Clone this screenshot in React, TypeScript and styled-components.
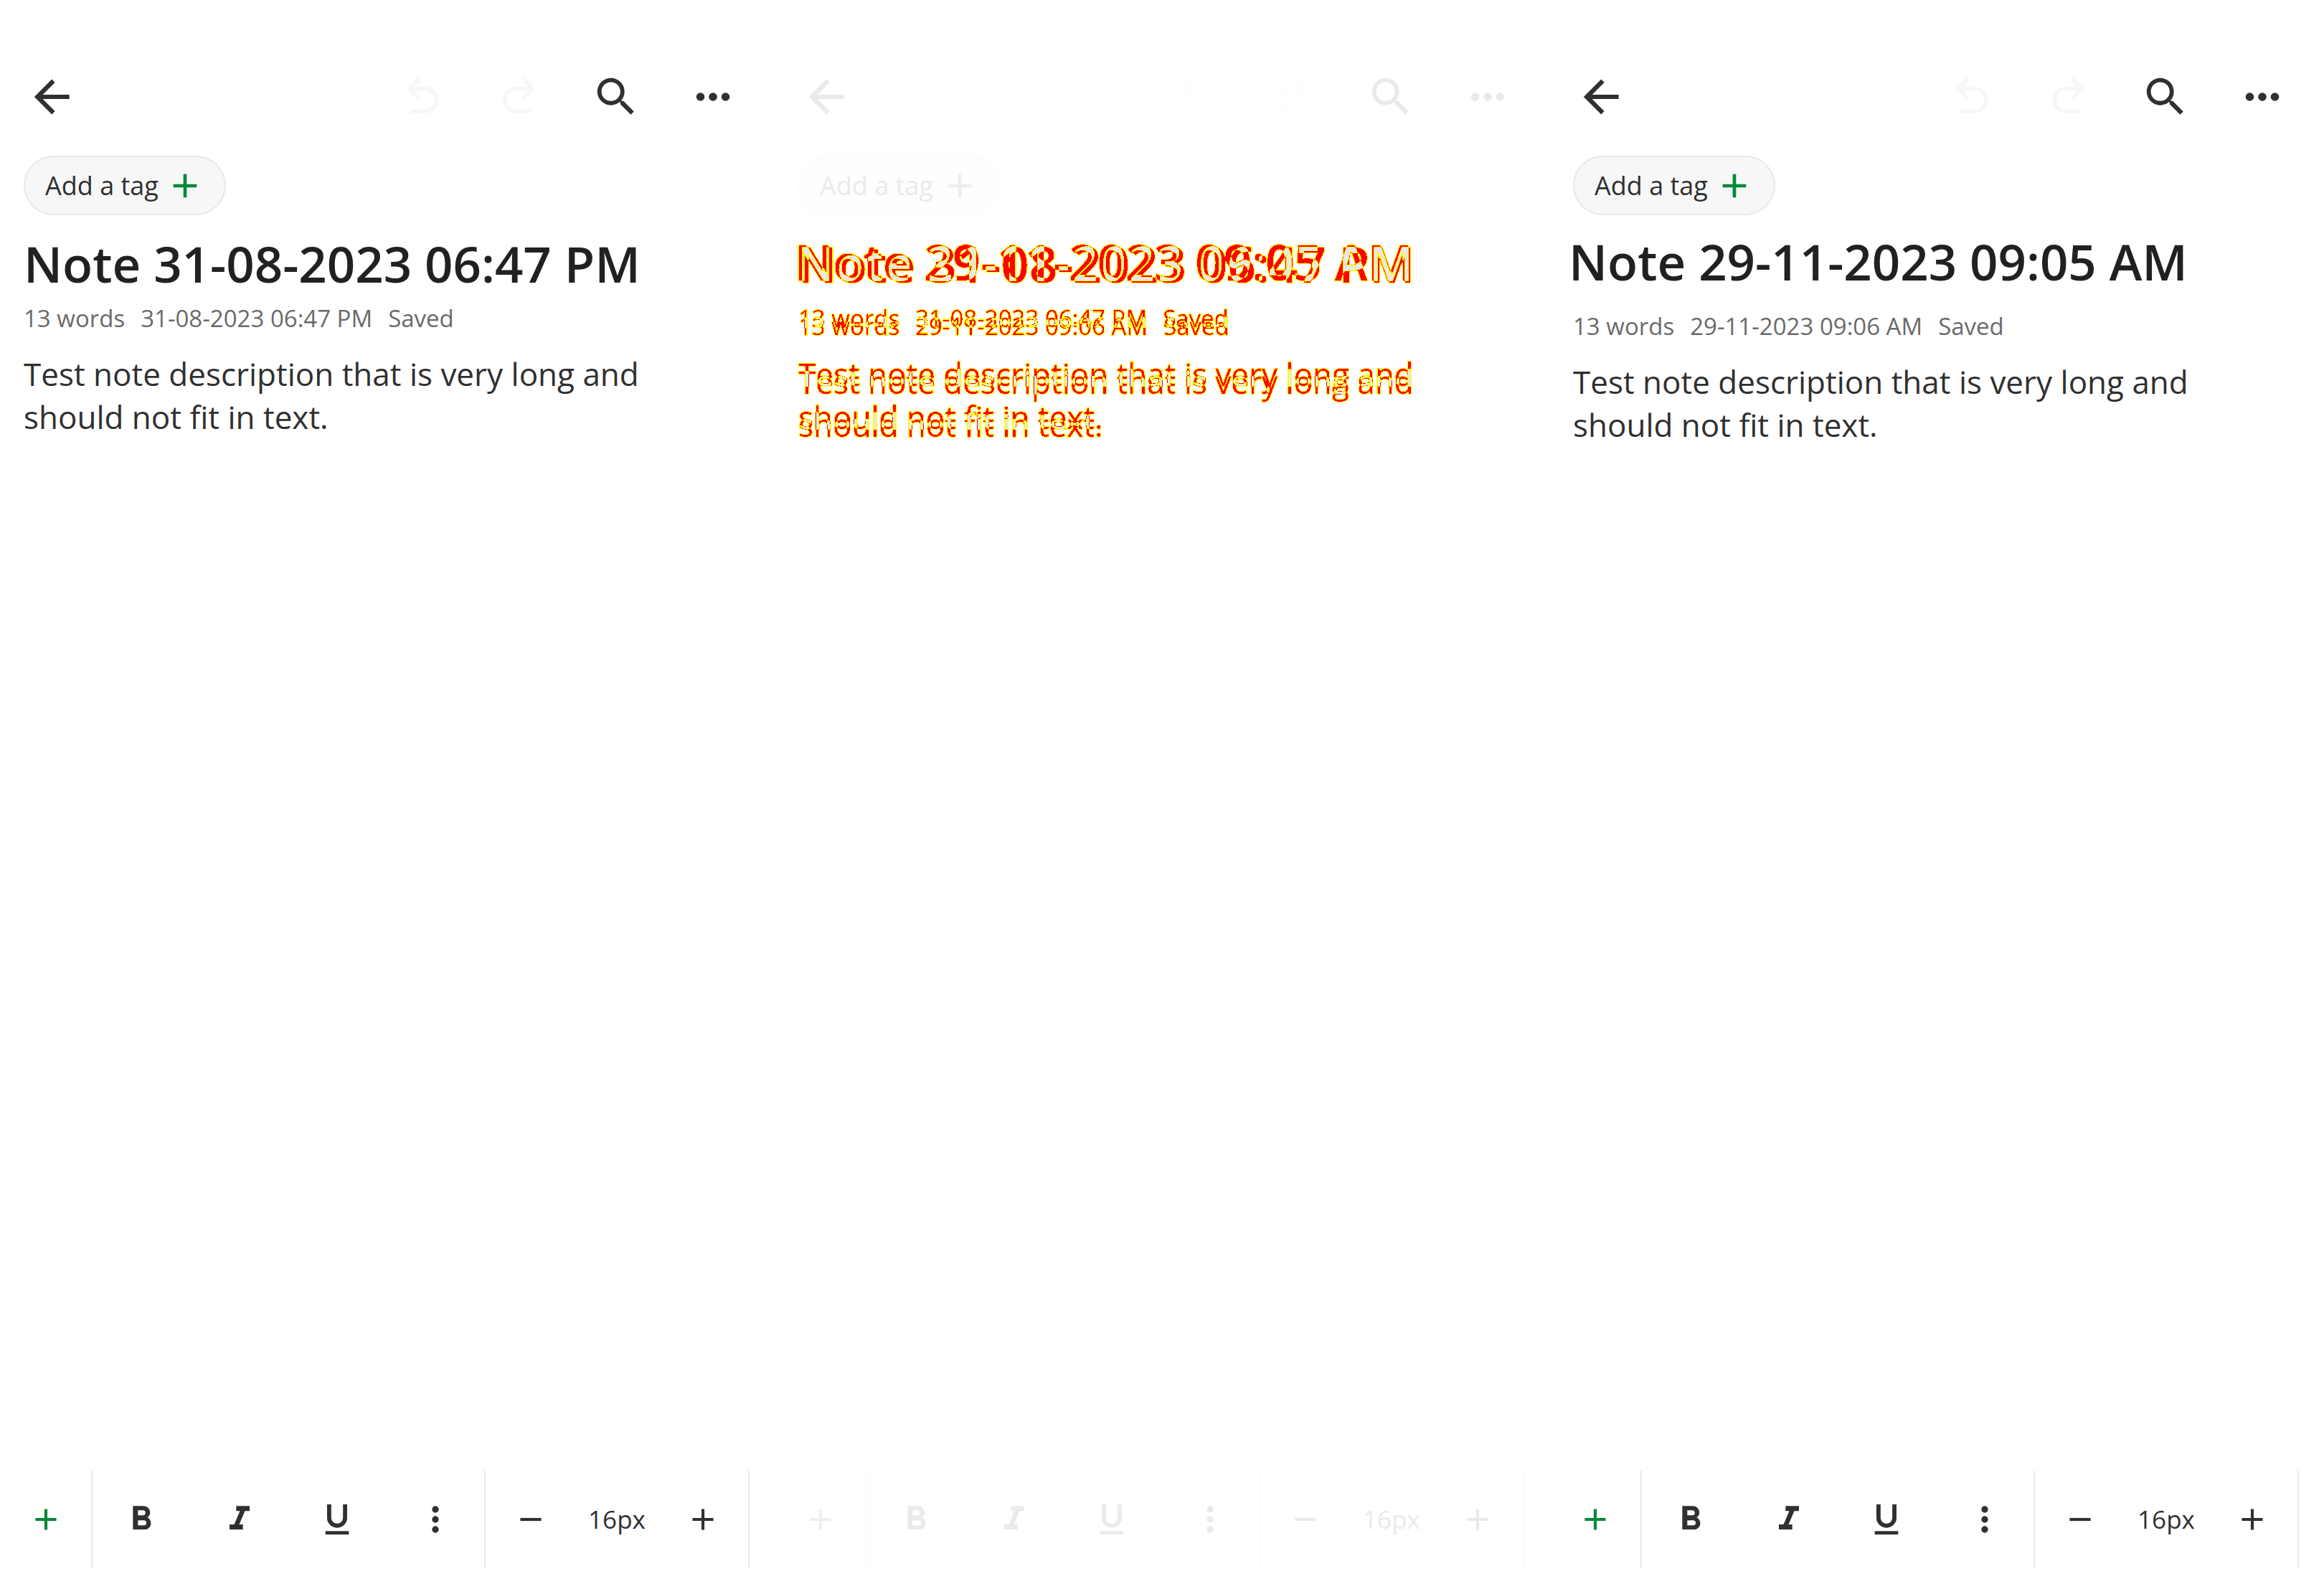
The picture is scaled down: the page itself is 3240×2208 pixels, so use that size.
import React from 'react';
import styled, { ThemeProvider, createGlobalStyle } from 'styled-components';

const GlobalStyle = createGlobalStyle`
  * {
    box-sizing: border-box;
  }

  body {
    margin: 0;
    background: #ffffff;
    font-family: "Open Sans", "Noto Sans", sans-serif;
  }

  h1,
  p {
    margin: 0;
  }
`;

/* ---------- themes ---------- */

const plain = {
  icon: '#303030',
  disabled: '#f7f7f7',
  accent: '#008837',
  heading: '#212121',
  text: '#303030',
  muted: '#6a6a6a',
  chip: '#f7f7f7',
  line: '#e8e8e8',
};

const faded = {
  ...plain,
  icon: '#eaeaea',
  disabled: '#fefefe',
  accent: '#eeeeee',
  text: '#eaeaea',
  chip: '#fefefe',
  line: '#fcfcfc',
};

type Theme = typeof plain;
type Tone = 'icon' | 'disabled' | 'accent';

/* ---------- icons ---------- */

const paths = {
  back: 'M20,11V13H8L13.5,18.5L12.08,19.92L4.16,12L12.08,4.08L13.5,5.5L8,11H20Z',
  undo: 'M20 13.5C20 17.09 17.09 20 13.5 20H6V18H13.5C16 18 18 16 18 13.5S16 9 13.5 9H7.83L10.91 12.09L9.5 13.5L4 8L9.5 2.5L10.92 3.91L7.83 7H13.5C17.09 7 20 9.91 20 13.5Z',
  redo: 'M4 13.5C4 17.09 6.91 20 10.5 20H18V18H10.5C8 18 6 16 6 13.5S8 9 10.5 9H16.17L13.09 12.09L14.5 13.5L20 8L14.5 2.5L13.08 3.91L16.17 7H10.5C6.91 7 4 9.91 4 13.5Z',
  search:
    'M9.5,3A6.5,6.5 0 0,1 16,9.5C16,11.11 15.41,12.59 14.44,13.73L14.71,14H15.5L20.5,19L19,20.5L14,15.5V14.71L13.73,14.44C12.59,15.41 11.11,16 9.5,16A6.5,6.5 0 0,1 3,9.5A6.5,6.5 0 0,1 9.5,3M9.5,5C7,5 5,7 5,9.5C5,12 7,14 9.5,14C12,14 14,12 14,9.5C14,7 12,5 9.5,5Z',
  more: 'M16,12A2,2 0 0,1 18,10A2,2 0 0,1 20,12A2,2 0 0,1 18,14A2,2 0 0,1 16,12M10,12A2,2 0 0,1 12,10A2,2 0 0,1 14,12A2,2 0 0,1 12,14A2,2 0 0,1 10,12M4,12A2,2 0 0,1 6,10A2,2 0 0,1 8,12A2,2 0 0,1 6,14A2,2 0 0,1 4,12Z',
  moreVertical:
    'M12,16A2,2 0 0,1 14,18A2,2 0 0,1 12,20A2,2 0 0,1 10,18A2,2 0 0,1 12,16M12,10A2,2 0 0,1 14,12A2,2 0 0,1 12,14A2,2 0 0,1 10,12A2,2 0 0,1 12,10M12,4A2,2 0 0,1 14,6A2,2 0 0,1 12,8A2,2 0 0,1 10,6A2,2 0 0,1 12,4Z',
  plus: 'M19,13H13V19H11V13H5V11H11V5H13V11H19V13Z',
  minus: 'M19,13H5V11H19V13Z',
  bold: 'M13.5,15.5H10V12.5H13.5A1.5,1.5 0 0,1 15,14A1.5,1.5 0 0,1 13.5,15.5M10,6.5H13A1.5,1.5 0 0,1 14.5,8A1.5,1.5 0 0,1 13,9.5H10M15.6,10.79C16.57,10.11 17.25,9 17.25,8C17.25,5.74 15.5,4 13.25,4H7V18H14.04C16.14,18 17.75,16.3 17.75,14.21C17.75,12.69 16.89,11.39 15.6,10.79Z',
  italic: 'M10,4V7H12.21L8.79,15H6V18H14V15H11.79L15.21,7H18V4H10Z',
  underline:
    'M5,21H19V19H5V21M12,17A6,6 0 0,0 18,11V3H15.5V11A3.5,3.5 0 0,1 12,14.5A3.5,3.5 0 0,1 8.5,11V3H6V11A6,6 0 0,0 12,17Z',
};

const Svg = styled.svg<{ $size: number; $tone: Tone }>`
  display: block;
  flex: none;
  width: ${(p) => p.$size}px;
  height: ${(p) => p.$size}px;
  fill: ${(p) => (p.theme as Theme)[p.$tone]};
`;

function Icon({ name, size, tone = 'icon' }: { name: keyof typeof paths; size: number; tone?: Tone }) {
  return (
    <Svg viewBox="0 0 24 24" $size={size} $tone={tone} aria-hidden="true">
      <path d={paths[name]} />
    </Svg>
  );
}

/* ---------- layout ---------- */

const Board = styled.main`
  display: grid;
  grid-template-columns: repeat(3, minmax(0, 1fr));
  min-height: 100vh;
`;

const Screen = styled.section`
  display: flex;
  flex-direction: column;
  padding: 80px 0 22px;
`;

const Header = styled.header`
  display: flex;
  align-items: center;
  justify-content: space-between;
  padding: 0 31px 0 17px;
`;

const Actions = styled.div`
  display: flex;
  gap: 25px;
`;

const IconButton = styled.button`
  display: flex;
  align-items: center;
  justify-content: center;
  width: 110px;
  height: 110px;
  padding: 0;
  border: 0;
  background: none;
`;

const TagRow = styled.div`
  display: flex;
  padding: 27px 33px 0;
`;

const TagButton = styled.button`
  display: flex;
  align-items: center;
  gap: 9px;
  height: 83px;
  padding: 0 27px 0 28px;
  border: 2px solid ${(p) => (p.theme as Theme).line};
  border-radius: 42px;
  background: ${(p) => (p.theme as Theme).chip};
  color: ${(p) => (p.theme as Theme).text};
  font-family: inherit;
  font-size: 36px;
  line-height: 48px;
`;

/* ---------- note ---------- */

const Article = styled.article<{ $shifted: boolean }>`
  display: flex;
  flex-direction: column;
  gap: ${(p) => (p.$shifted ? 20 : 6)}px;
  padding: ${(p) => (p.$shifted ? '16px 66px 0 27px' : '19px 66px 0 33px')};
`;

const Title = styled.h1`
  color: ${(p) => (p.theme as Theme).heading};
  font-size: 69px;
  font-weight: 600;
  line-height: 96px;
  white-space: nowrap;
`;

const Body = styled.div<{ $shifted: boolean }>`
  display: flex;
  flex-direction: column;
  gap: 25px;
  padding-left: ${(p) => (p.$shifted ? 6 : 0)}px;
`;

const Meta = styled.div`
  display: flex;
  gap: 22px;
  color: ${(p) => (p.theme as Theme).muted};
  font-size: 33px;
  line-height: 45px;
`;

const Description = styled.p`
  color: ${(p) => (p.theme as Theme).text};
  font-size: 44px;
  line-height: 60px;
`;

interface NoteData {
  title: string;
  edited: string;
  shifted: boolean;
}

const august: NoteData = {
  title: 'Note 31-08-2023 06:47 PM',
  edited: '31-08-2023 06:47 PM',
  shifted: false,
};

const november: NoteData = {
  title: 'Note 29-11-2023 09:05 AM',
  edited: '29-11-2023 09:06 AM',
  shifted: true,
};

function Note({ note }: { note: NoteData }) {
  return (
    <Article $shifted={note.shifted}>
      <Title>{note.title}</Title>
      <Body $shifted={note.shifted}>
        <Meta>
          <span>13 words</span>
          <span>{note.edited}</span>
          <span>Saved</span>
        </Meta>
        <Description>Test note description that is very long and should not fit in text.</Description>
      </Body>
    </Article>
  );
}

/* ---------- difference of two notes ---------- */

// Both notes are added up in half grey on black; the filter then colours
// no ink white, one note red, both notes grey and soft edges yellow.
const inkA = { ...plain, heading: '#808080', text: '#808080', muted: '#808080' };
const inkB = { ...plain, heading: '#7f7f7f', text: '#7f7f7f', muted: '#7f7f7f' };

const Difference = styled.div`
  display: grid;
  isolation: isolate;
  background: #000000;
  filter: url(#difference-colours);
`;

const Layer = styled.div`
  grid-area: 1 / 1;
  mix-blend-mode: plus-lighter;
  -webkit-text-stroke: 2px #383838;
  paint-order: stroke fill;
`;

const FilterDefs = styled.svg`
  position: absolute;
  width: 0;
  height: 0;
`;

function NoteDifference() {
  return (
    <>
      <FilterDefs aria-hidden="true">
        <filter id="difference-colours" x="0" y="0" width="100%" height="100%" colorInterpolationFilters="sRGB">
          <feComponentTransfer>
            <feFuncR type="discrete" tableValues="1 1 1 1 1 1 1 1 1 0.91" />
            <feFuncG type="discrete" tableValues="1 1 1 1 0 0 1 1 1 0.91" />
            <feFuncB type="discrete" tableValues="1 0 0 0 0 0 0 0 0 0.91" />
          </feComponentTransfer>
        </filter>
      </FilterDefs>
      <Difference>
        <ThemeProvider theme={inkA}>
          <Layer>
            <Note note={august} />
          </Layer>
        </ThemeProvider>
        <ThemeProvider theme={inkB}>
          <Layer>
            <Note note={november} />
          </Layer>
        </ThemeProvider>
      </Difference>
    </>
  );
}

/* ---------- format bar ---------- */

const FormatBar = styled.footer`
  display: flex;
  height: 136px;
  margin-top: auto;
`;

const Group = styled.div<{ $width: number }>`
  display: flex;
  align-items: stretch;
  width: ${(p) => p.$width}px;
  border-right: 2px solid ${(p) => (p.theme as Theme).line};
`;

const Tool = styled.button`
  display: flex;
  flex: 1;
  align-items: center;
  justify-content: center;
  padding: 0;
  border: 0;
  background: none;
`;

const FontSize = styled.output`
  align-self: center;
  width: 114px;
  color: ${(p) => (p.theme as Theme).text};
  font-size: 35px;
  line-height: 48px;
  text-align: center;
`;

function Editor({ theme, children }: { theme: Theme; children: React.ReactNode }) {
  return (
    <ThemeProvider theme={theme}>
      <Screen>
        <Header>
          <IconButton aria-label="Back">
            <Icon name="back" size={74} />
          </IconButton>
          <Actions>
            <IconButton aria-label="Undo" disabled>
              <Icon name="undo" size={68} tone="disabled" />
            </IconButton>
            <IconButton aria-label="Redo" disabled>
              <Icon name="redo" size={68} tone="disabled" />
            </IconButton>
            <IconButton aria-label="Search">
              <Icon name="search" size={70} />
            </IconButton>
            <IconButton aria-label="More">
              <Icon name="more" size={70} />
            </IconButton>
          </Actions>
        </Header>
        <TagRow>
          <TagButton>
            Add a tag
            <Icon name="plus" size={56} tone="accent" />
          </TagButton>
        </TagRow>
        {children}
        <FormatBar>
          <Group $width={129}>
            <Tool aria-label="Insert">
              <Icon name="plus" size={50} tone="accent" />
            </Tool>
          </Group>
          <Group $width={548}>
            <Tool aria-label="Bold">
              <Icon name="bold" size={56} />
            </Tool>
            <Tool aria-label="Italic">
              <Icon name="italic" size={56} />
            </Tool>
            <Tool aria-label="Underline">
              <Icon name="underline" size={56} />
            </Tool>
            <Tool aria-label="More formats">
              <Icon name="moreVertical" size={56} />
            </Tool>
          </Group>
          <Group $width={368}>
            <Tool aria-label="Smaller text">
              <Icon name="minus" size={50} />
            </Tool>
            <FontSize>16px</FontSize>
            <Tool aria-label="Larger text">
              <Icon name="plus" size={50} />
            </Tool>
          </Group>
        </FormatBar>
      </Screen>
    </ThemeProvider>
  );
}

export default function App() {
  return (
    <>
      <GlobalStyle />
      <Board>
        <Editor theme={plain}>
          <Note note={august} />
        </Editor>
        <Editor theme={faded}>
          <NoteDifference />
        </Editor>
        <Editor theme={plain}>
          <Note note={november} />
        </Editor>
      </Board>
    </>
  );
}
